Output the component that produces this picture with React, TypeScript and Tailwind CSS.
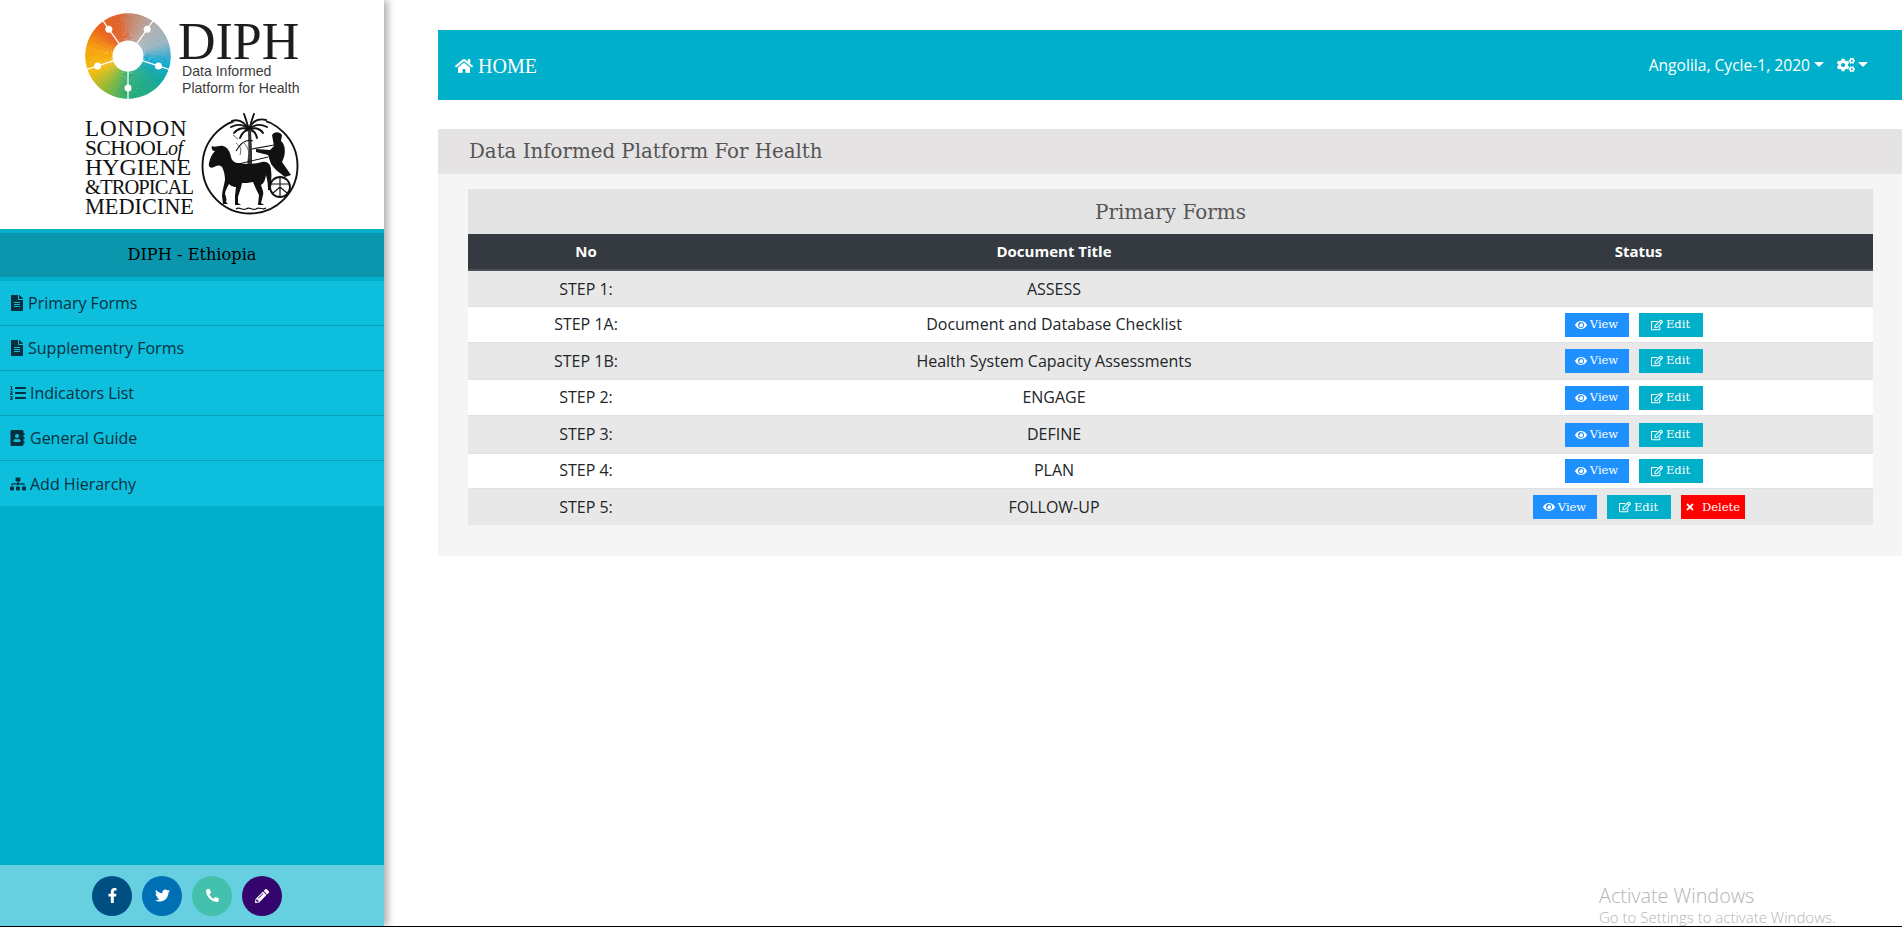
import { FaFileAlt, FaListOl, FaAddressBook, FaSitemap, FaHome, FaCogs, FaEye, FaRegEdit, FaTimes, FaFacebookF, FaTwitter, FaPhone, FaPencilAlt } from "react-icons/fa";

const serif = "font-['DejaVu_Serif',serif]";

const menu = [
  { label: "Primary Forms", icon: <FaFileAlt className="w-[14px] h-[16px]" /> , gap: "gap-[4px]" },
  { label: "Supplementry Forms", icon: <FaFileAlt className="w-[14px] h-[16px]" />, gap: "gap-[4px]" },
  { label: "Indicators List", icon: <FaListOl className="w-[16px] h-[16px]" />, gap: "gap-[4px]" },
  { label: "General Guide", icon: <FaAddressBook className="w-[15px] h-[16px]" />, gap: "gap-[5px]" },
  { label: "Add Hierarchy", icon: <FaSitemap className="w-[16px] h-[16px]" />, gap: "gap-[4px]" },
];

const rows = [
  { no: "STEP 1:", title: "ASSESS", h: "h-[36px]", buttons: 0, text: "pt-[1px]" },
  { no: "STEP 1A:", title: "Document and Database Checklist", h: "h-[36px]", buttons: 2, text: "pb-[1px]" },
  { no: "STEP 1B:", title: "Health System Capacity Assessments", h: "h-[37px]", buttons: 2, text: "" },
  { no: "STEP 2:", title: "ENGAGE", h: "h-[36px]", buttons: 2, text: "" },
  { no: "STEP 3:", title: "DEFINE", h: "h-[38px]", buttons: 2, text: "pb-[1px]" },
  { no: "STEP 4:", title: "PLAN", h: "h-[35px]", buttons: 2, text: "pb-[1px]" },
  { no: "STEP 5:", title: "FOLLOW-UP", h: "h-[37px]", buttons: 3, text: "" },
];

const wheelStops: [number, number[]][] = [
  [0, [200, 130, 100]], [40, [176, 176, 176]], [70, [150, 180, 195]], [100, [12, 168, 210]],
  [135, [24, 168, 145]], [180, [45, 172, 115]], [215, [150, 185, 50]], [245, [243, 190, 15]],
  [280, [247, 160, 10]], [315, [232, 95, 30]], [345, [222, 100, 45]], [360, [200, 130, 100]],
];

function wheelColor(deg: number) {
  for (let i = 0; i < wheelStops.length - 1; i++) {
    const [a, ca] = wheelStops[i];
    const [b, cb] = wheelStops[i + 1];
    if (deg >= a && deg <= b) {
      const t = (deg - a) / (b - a);
      return `rgb(${ca.map((c, j) => Math.round(c + (cb[j] - c) * t)).join(",")})`;
    }
  }
  return "rgb(200,130,100)";
}

function DiphWheel() {
  const wedges = Array.from({ length: 120 }, (_, i) => i * 3);
  const point = (deg: number, r: number) => {
    const a = ((deg - 90) * Math.PI) / 180;
    return `${44 + r * Math.cos(a)} ${44 + r * Math.sin(a)}`;
  };
  const spokes = [
    [-35.5, 33], [35.5, 33], [-108, 32], [108, 32], [180, 32],
  ];
  return (
    <svg width="88" height="88" viewBox="0 0 88 88" className="shrink-0">
      {wedges.map((d) => (
        <path key={d} d={`M44 44 L${point(d, 42.7)} L${point(d + 3.6, 42.7)} Z`} fill={wheelColor(d)} />
      ))}
      {spokes.map(([deg, r]) => (
        <g key={deg}>
          <path d={`M${point(deg, 10)} L${point(deg, 44)}`} stroke="#fff" strokeWidth="1.3" />
          <circle cx={44 + r * Math.cos(((deg - 90) * Math.PI) / 180)} cy={44 + r * Math.sin(((deg - 90) * Math.PI) / 180)} r="3.5" fill="#fff" />
        </g>
      ))}
      <circle cx="44" cy="44" r="15.5" fill="#fff" />
    </svg>
  );
}

function Seal() {
  return (
    <svg width="100" height="104" viewBox="0 0 100 104" className="shrink-0">
      <circle cx="50" cy="53" r="47.5" fill="#fff" stroke="#111" strokeWidth="1.9" />
      <rect x="32" y="0" width="34" height="9" fill="#fff" />
      <g stroke="#111" strokeWidth="1.9" fill="none" strokeLinecap="round">
        <path d="M49 17 C44 8 38 6 32 8" />
        <path d="M49 17 C44 11 37 11 31 14" />
        <path d="M49 17 C44 14 38 15 34 20" />
        <path d="M49 17 C45 17 42 20 40 25" />
        <path d="M49 17 C47 10 46 6 44 1" />
        <path d="M49 17 C52 8 58 5 66 7" />
        <path d="M49 17 C54 11 61 11 67 14" />
        <path d="M49 17 C54 14 60 15 63 20" />
        <path d="M49 17 C53 17 56 20 57 25" />
        <path d="M49 17 C51 10 52 6 54 1" />
      </g>
      <path d="M48 17 L51 17 L52 38 L52 54 L47 54 L48.5 38 Z" fill="#333" />
      <path d="M36 30 C40 33 42 36 40 42 M44 30 C48 34 50 40 49 46 M38 26 L33 22" stroke="#555" strokeWidth="0.9" fill="none" />
      <path d="M9 50 C10 45 12 41 15 38 C12 38 11 35 12 33 C15 35 19 32 23 33 C27 34 30 38 31 44 C32 48 35 50 39 50 C47 52 54 51 62 49 C67 48 71 51 71 57 C72 63 71 70 70 77 L68 77 C68 70 67 66 66 62 C65 68 64 70 61 72 C62 76 64 78 63 82 L61 90 L64 92 L58 92 L59 82 C57 78 55 74 53 69 C49 70 45 70 42 70 C41 76 39 80 38 84 L38 90 L41 92 L35 92 L35 83 L36 74 C34 74 32 74 29 71 C27 75 25 78 25 81 C26 84 27 86 26 89 L28 91 L23 91 L22 83 C22 78 24 73 25 67 C25 62 24 58 22 54 C20 52 17 52 14 54 C11 56 8 54 9 50 Z" fill="#111" />
      <path d="M72 22 C75 18 80 19 82 22 L81 28 C86 32 86 42 82 49 L91 62 L85 64 L76 57 L71 51 L68 42 L56 39 L56 36 L70 37 L74 33 Z" fill="#111" />
      <path d="M36 38 C42 28 48 26 53 28 M52 36 L74 32" stroke="#111" strokeWidth="1.2" fill="none" />
      <path d="M30 53 L68 44" stroke="#111" strokeWidth="1" fill="none" />
      <circle cx="80" cy="74" r="10" fill="#fff" stroke="#111" strokeWidth="1.9" />
      <path d="M80 64 L80 84 M71 71 L89 71 M73 80 L80 74 L87 80" stroke="#111" strokeWidth="1.2" fill="none" />
      <path d="M36 96 C40 93 42 98 46 96 C50 93 52 98 56 96 C60 93 62 98 66 95" stroke="#111" strokeWidth="1.3" fill="none" />
    </svg>
  );
}

function Logos() {
  return (
    <div className="h-[229px] bg-white pt-[12px] pl-[84px]">
      <div className="flex h-[88px]">
        <DiphWheel />
        <div className="ml-[6px] font-['Liberation_Serif',serif] text-[#1d1d1b]">
          <div className="text-[52px] leading-[40px] mt-[10px] h-[40px]">DIPH</div>
          <div className="font-['Liberation_Sans',sans-serif] text-[14.1px] leading-[16.5px] mt-[1px] ml-[4px] text-[#3c3c3b] whitespace-nowrap">
            <div>Data Informed</div>
            <div>Platform for Health</div>
          </div>
        </div>
      </div>
      <div className="flex mt-[13px] ml-[1px] h-[104px]">
        <div className="w-[115px] pt-[6px] font-['Liberation_Serif',serif] text-[#111] whitespace-nowrap">
          <div className="text-[23px] leading-[19.5px] tracking-[0.9px]">LONDON</div>
          <div className="text-[21.5px] leading-[19.5px] tracking-[-0.5px]">SCHOOL<span className="italic text-[20px]">of</span></div>
          <div className="text-[24px] leading-[19.5px] tracking-[-0.1px]">HYGIENE</div>
          <div className="text-[20.5px] leading-[19.5px] tracking-[-0.9px]">&amp;TROPICAL</div>
          <div className="text-[22.3px] leading-[19.5px]">MEDICINE</div>
        </div>
        <Seal />
      </div>
    </div>
  );
}

function Caret() {
  return <span className="block border-x-[5px] border-t-[5px] border-x-transparent border-t-white" />;
}

function Sidebar() {
  return (
    <aside className="relative z-10 w-[384px] h-[926px] shrink-0 flex flex-col bg-[#00afca] shadow-[4px_0_7px_rgba(0,0,0,0.3)]">
      <Logos />
      <div className={`mt-[4px] h-[44px] bg-[#0a97ae] flex items-center justify-center text-black text-[16.2px] ${serif}`}>
        DIPH - Ethiopia
      </div>
      <nav className="mt-[4px] bg-[#0ebedd] font-['Open_Sans',sans-serif] text-[16px] text-[#07303e]">
        {menu.map((item, i) => (
          <div key={item.label} className={`h-[45px] pl-[10px] flex items-center ${item.gap} ${i < 4 ? "border-b border-[#08a0b8]" : ""}`}>
            {item.icon}
            <span>{item.label}</span>
          </div>
        ))}
      </nav>
      <div className="mt-auto h-[61px] bg-[#66cfe0] flex items-center justify-center gap-[10px] pr-[10px]">
        <span className="w-[40px] h-[40px] rounded-full bg-[#004f82] text-white flex items-center justify-center"><FaFacebookF className="w-[13px] h-[15px]" /></span>
        <span className="w-[40px] h-[40px] rounded-full bg-[#0070b5] text-white flex items-center justify-center"><FaTwitter className="w-[15px] h-[15px]" /></span>
        <span className="w-[40px] h-[40px] rounded-full bg-[#43c1ad] text-white flex items-center justify-center"><FaPhone className="w-[13px] h-[13px] -scale-x-100" /></span>
        <span className="w-[40px] h-[40px] rounded-full bg-[#34056d] text-white flex items-center justify-center"><FaPencilAlt className="w-[14px] h-[14px]" /></span>
      </div>
    </aside>
  );
}

function ActionButton({ kind }: { kind: "view" | "edit" | "delete" }) {
  const look = {
    view: { bg: "bg-[#1e90ff]", text: "View", icon: <FaEye className="w-[12px] h-[12px]" /> },
    edit: { bg: "bg-[#00afca]", text: "Edit", icon: <FaRegEdit className="w-[12px] h-[12px]" /> },
    delete: { bg: "bg-[#ff0000]", text: "Delete", icon: <FaTimes className="w-[10px] h-[10px] mr-[4px]" /> },
  }[kind];
  return (
    <span className={`w-[64px] h-[24px] ${look.bg} text-white text-[11.5px] flex items-center justify-center gap-[3px] ${serif}`}>
      {look.icon}
      {look.text}
    </span>
  );
}

function FormsTable() {
  return (
    <div className="bg-[#e4e3e3]">
      <div className={`h-[45px] flex items-center justify-center text-[20px] text-[#555] ${serif}`}>Primary Forms</div>
      <table className="w-full table-fixed font-['Open_Sans',sans-serif] text-[16px] text-[#212529]">
        <thead>
          <tr className="h-[36px] bg-[#343a40] text-white text-[15px] border-b-2 border-[#4b5157]">
            <th className="w-[236px] font-bold">No</th>
            <th className="w-[700px] font-bold">Document Title</th>
            <th className="font-bold">Status</th>
          </tr>
        </thead>
        <tbody>
          {rows.map((row, i) => (
            <tr key={row.no} className={`${row.h} ${i % 2 === 0 ? "bg-[#e8e8e8]" : "bg-white"} ${i > 0 ? "border-t border-[#dee2e6]" : ""}`}>
              <td className={`text-center ${row.text}`}>{row.no}</td>
              <td className={`text-center ${row.text}`}>{row.title}</td>
              <td>
                {row.buttons > 0 && (
                  <div className={`flex justify-center gap-[10px] pt-[1px] ${row.buttons === 2 ? "pr-[10px]" : ""}`}>
                    <ActionButton kind="view" />
                    <ActionButton kind="edit" />
                    {row.buttons === 3 && <ActionButton kind="delete" />}
                  </div>
                )}
              </td>
            </tr>
          ))}
        </tbody>
      </table>
    </div>
  );
}

export default function App() {
  return (
    <div className="relative flex h-[927px] overflow-hidden border-b border-black bg-white">
      <Sidebar />
      <main className="flex-1 pt-[30px] pl-[54px]">
        <header className="h-[70px] bg-[#00afca] text-white flex items-center justify-between pl-[17px] pr-[34px]">
          <div className="flex items-center gap-[5px] pt-[1px] font-['Liberation_Serif',serif] text-[20px]">
            <FaHome className="w-[18px] h-[18px]" />
            HOME
          </div>
          <div className="flex items-center font-['Open_Sans',sans-serif] text-[15.6px]">
            <span className="mt-[2px]">Angolila, Cycle-1, 2020</span>
            <span className="ml-[4px]"><Caret /></span>
            <FaCogs className="ml-[13px] w-[18px] h-[18px]" />
            <span className="ml-[3px]"><Caret /></span>
          </div>
        </header>
        <section className="mt-[29px] bg-[#f5f5f5] pb-[31px]">
          <h1 className={`h-[45px] bg-[#e5e3e3] pl-[31px] flex items-center text-[19.8px] text-[#555] ${serif}`}>
            Data Informed Platform For Health
          </h1>
          <div className="pt-[15px] pl-[30px] pr-[29px]">
            <FormsTable />
          </div>
        </section>
      </main>
      <div className="absolute left-[1599px] top-[885px] font-['Open_Sans',sans-serif] font-light text-[#b4b4b4] whitespace-nowrap">
        <div className="text-[19.8px] leading-[22px]">Activate Windows</div>
        <div className="text-[15px] leading-[20px]">Go to Settings to activate Windows.</div>
      </div>
    </div>
  );
}
